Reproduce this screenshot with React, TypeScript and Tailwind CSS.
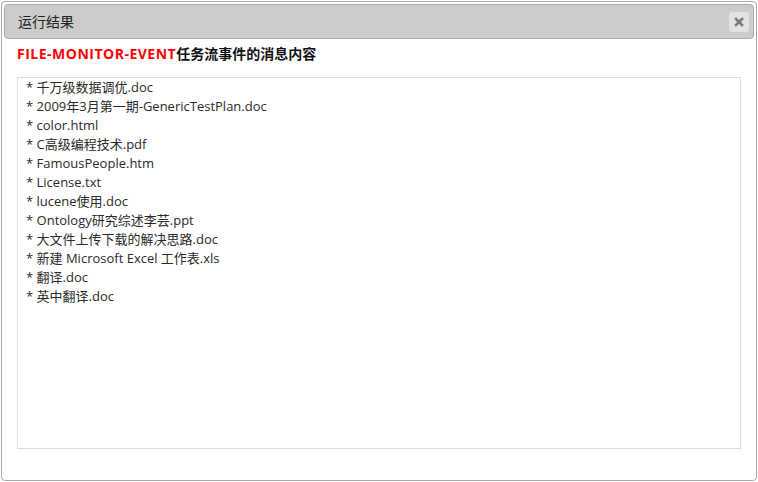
const files = [
  '千万级数据调优.doc',
  '2009年3月第一期-GenericTestPlan.doc',
  'color.html',
  'C高级编程技术.pdf',
  'FamousPeople.htm',
  'License.txt',
  'lucene使用.doc',
  'Ontology研究综述李芸.ppt',
  '大文件上传下载的解决思路.doc',
  '新建 Microsoft Excel 工作表.xls',
  '翻译.doc',
  '英中翻译.doc',
]

function App() {
  return (
    <div
      className="w-[758px] h-[482px] bg-white p-px"
      style={{ fontFamily: '"Open Sans", "Noto Sans CJK SC", sans-serif' }}
    >
      <div className="w-[756px] h-[480px] border border-[#aaa] rounded-[4px] p-[2px] flex flex-col">
        <div className="h-[35px] border border-[#aaa] bg-[#cccccc] rounded-[4px] flex items-center justify-between pl-[13px] pr-[4px]">
          <span className="text-[14px] text-[#222]">运行结果</span>
          <button className="w-[20px] h-[20px] rounded-[3px] bg-[#e2e2e2] flex items-center justify-center">
            <svg width="10" height="10" viewBox="0 0 10 10">
              <path d="M2 2 L8 8 M8 2 L2 8" stroke="#7a7a7a" strokeWidth="2.6" strokeLinecap="square" />
            </svg>
          </button>
        </div>
        <div className="px-[13px] pt-[5px]">
          <div className="text-[14px] leading-[20px] font-bold text-[#111]">
            <span className="text-[#ff0000] tracking-[0.5px]">FILE-MONITOR-EVENT</span>任务流事件的消息内容
          </div>
          <div className="mt-[13px] h-[372px] border border-[#dcdcdc] px-[8px] text-[13px] leading-[19px] text-[#2a2a2a]">
            {files.map((f) => (
              <div key={f}>* {f}</div>
            ))}
          </div>
        </div>
      </div>
    </div>
  )
}

export default App
